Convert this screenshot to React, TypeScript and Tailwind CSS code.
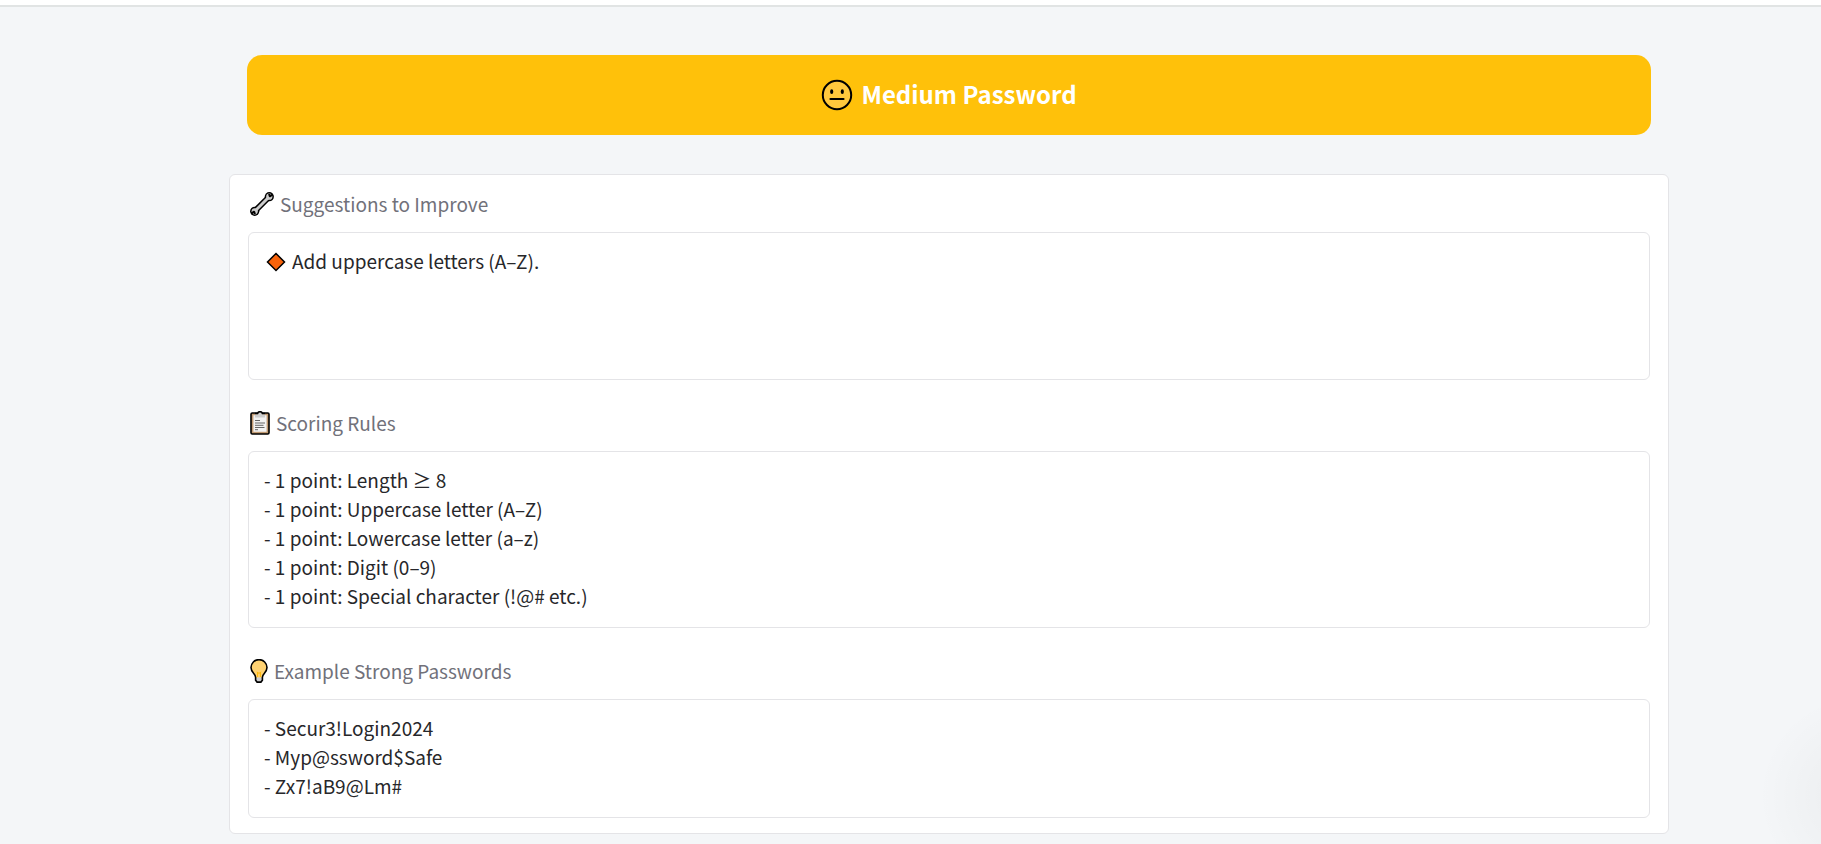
import type { ReactNode } from "react";

function NeutralFace() {
  return (
    <svg viewBox="0 0 32 32" className="size-8 shrink-0" aria-hidden="true">
      <circle cx="16" cy="16" r="14.2" fill="#ffc83d" stroke="#000" strokeWidth="2" />
      <ellipse cx="10.7" cy="12.7" rx="1.6" ry="2.4" />
      <ellipse cx="21.3" cy="12.7" rx="1.6" ry="2.4" />
      <path d="M9.5 20h13" stroke="#000" strokeWidth="2.2" strokeLinecap="round" />
    </svg>
  );
}

function Wrench() {
  return (
    <svg viewBox="0 0 24 24" className="size-6 shrink-0" aria-hidden="true">
      <path d="M5 19 19 5" stroke="#000" strokeWidth="6" />
      <circle cx="19.3" cy="4.7" r="4.6" />
      <circle cx="4.7" cy="19.3" r="4.6" />
      <path d="M5 19 19 5" stroke="#ccc" strokeWidth="3" />
      <circle cx="19.3" cy="4.7" r="3.1" fill="#ccc" />
      <circle cx="4.7" cy="19.3" r="3.1" fill="#ccc" />
      <path d="m22.8 2.4-2.9 1.9-.9-2.3M1.2 21.6l2.9-1.900.9 2.300" fill="none" stroke="#000" strokeWidth="2" strokeLinejoin="round" />
    </svg>
  );
}

function Clipboard() {
  return (
    <svg viewBox="0 0 20 24" className="h-6 w-5 shrink-0" aria-hidden="true">
      <rect x="1" y="2" width="18" height="21" rx="1.2" fill="#c19a72" stroke="#000" strokeWidth="1.6" />
      <path d="M3.4 4.2h13.2v16.600H3.400z" fill="#f2f2f2" />
      <path d="M5 6.500V3.200h2.800a2.300 2.300 0 0 1 4.400 0H15v3.300Z" fill="#ccc" />
      <path d="M5 2.400h2.600a2.500 2.500 0 0 1 4.800 0H15" fill="none" stroke="#000" strokeWidth="1.5" />
      <path d="M5 9.500h5M5 12h10M5 14.300h8.500M5 16.500h9.500M5 18.700h3" stroke="#666" strokeWidth="1" />
    </svg>
  );
}

function Bulb() {
  return (
    <svg viewBox="0 0 18 24" className="h-6 w-[18px] shrink-0" aria-hidden="true">
      <path d="M5.600 18h6.800v3.300l-1.500 1.900H7.100l-1.500-1.900Z" fill="#ccc" />
      <path
        d="M5.600 18.500C5.600 14.500 1 13.600 1 8.600a8 8 0 0 1 16 0c0 5-4.600 5.900-4.600 9.900Z"
        fill="#ffd272"
      />
      <path d="M6.800 13l2.200 1.300 2.200-1.300M7.600 14v4M10.400 14v4" fill="none" stroke="#ffb800" strokeWidth="1" />
      <path
        d="M5.600 21.200v-3C5.600 14.500 1 13.600 1 8.600a8 8 0 0 1 16 0c0 5-4.600 5.900-4.600 9.600v3l-1.500 1.900H7.100Z"
        fill="none"
        stroke="#000"
        strokeWidth="1.6"
      />
    </svg>
  );
}

function Diamond() {
  return (
    <svg viewBox="0 0 20 20" className="mt-1.5 ml-0.5 size-5 shrink-0" aria-hidden="true">
      <path d="M10 1.500 18.500 10 10 18.500 1.500 10Z" fill="#f7630c" stroke="#000" strokeWidth="1.5" />
    </svg>
  );
}

type FieldProps = {
  id: string;
  label: string;
  icon: ReactNode;
  value: string;
  rows: number;
  marker?: ReactNode;
};

function Field({ id, label, icon, value, rows, marker }: FieldProps) {
  return (
    <div>
      <label htmlFor={id} className="mb-[15px] flex h-[27px] items-center gap-1.5 pl-0.5 text-[#71717a]">
        {icon}
        {label}
      </label>
      <div className="flex gap-1.5 rounded-md border border-[#e4e4e7] bg-white px-[15px] pt-[13px] pb-[17px] text-[#27272a]">
        {marker}
        <textarea
          id={id}
          rows={rows}
          readOnly
          value={value}
          className="block min-w-0 flex-1 resize-none overflow-hidden bg-transparent outline-none"
        />
      </div>
    </div>
  );
}

const rules = [
  "- 1 point: Length ≥ 8",
  "- 1 point: Uppercase letter (A–Z)",
  "- 1 point: Lowercase letter (a–z)",
  "- 1 point: Digit (0–9)",
  "- 1 point: Special character (!@# etc.)",
].join("\n");

const examples = ["- Secur3!Login2024", "- Myp@ssword$Safe", "- Zx7!aB9@Lm#"].join("\n");

export default function App() {
  return (
    <div className="relative min-h-screen overflow-hidden bg-[#f4f6f8] font-['Noto_Sans_CJK_KR','Noto_Sans',sans-serif] text-[19px] leading-[29px]">
      <div className="h-[7px] border-b-2 border-[#e1e4e4] bg-white" />
      <div className="pl-[77px]">
        <main className="mx-auto max-w-[1440px] pt-12 pb-2.5">
          <div className="mx-[18px] flex h-20 items-center justify-center gap-2 rounded-[15px] bg-[#ffc10a] text-[24px] font-bold text-white" role="status">
            <NeutralFace />
            <span className="pb-1">Medium Password</span>
          </div>
          <section className="mt-[39px] flex flex-col gap-[29px] rounded-md border border-[#e4e4e7] bg-white px-[18px] pt-[15px] pb-[15px]">
            <Field
              id="suggestions"
              label="Suggestions to Improve"
              icon={<Wrench />}
              value="Add uppercase letters (A–Z)."
              rows={4}
              marker={<Diamond />}
            />
            <Field id="rules" label="Scoring Rules" icon={<Clipboard />} value={rules} rows={5} />
            <Field id="examples" label="Example Strong Passwords" icon={<Bulb />} value={examples} rows={3} />
          </section>
        </main>
      </div>
      <div className="pointer-events-none absolute -right-36 -bottom-14 size-52 rounded-full bg-radial from-black/4 to-transparent to-70%" />
    </div>
  );
}
